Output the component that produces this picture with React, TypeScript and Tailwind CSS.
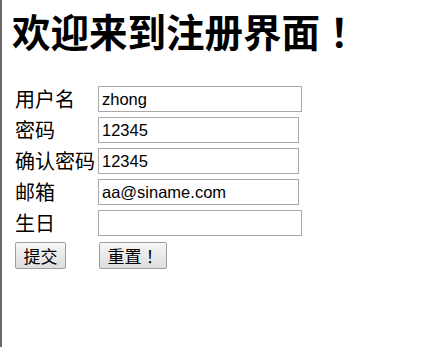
import React from 'react';

const cjk = { fontFamily: '"Noto Sans CJK SC", "Microsoft YaHei", sans-serif' };
const jp = { fontFamily: '"Noto Sans CJK JP", sans-serif' };
const latin = { fontFamily: '"Liberation Sans", Arial, "Noto Sans CJK SC", sans-serif' };

interface Field {
  label: string;
  value: string;
  width: string;
}

const fields: Field[] = [
  { label: '用户名', value: 'zhong', width: 'w-[204px]' },
  { label: '密码', value: '12345', width: 'w-[201px]' },
  { label: '确认密码', value: '12345', width: 'w-[201px]' },
  { label: '邮箱', value: 'aa@siname.com', width: 'w-[201px]' },
  { label: '生日', value: '', width: 'w-[204px]' },
];

export default function App() {
  return (
    <div className="w-[448px] h-[347px] bg-white border-l-2 border-[#6b6b6b] overflow-hidden text-black" style={cjk}>
      <h1 className="pl-[10px] pt-[6px] text-[38.5px] leading-[48px] font-bold">
        欢迎来到注册界面<span style={jp}>！</span>
      </h1>
      <form className="mt-[32px] pl-[13px] flex flex-col gap-[5px]">
        {fields.map((f) => (
          <div key={f.label} className="flex items-center h-[26px]">
            <span className="w-[83px] text-[20px] leading-[26px]">{f.label}</span>
            <input
              type="text"
              defaultValue={f.value}
              className={`${f.width} h-[26px] border border-[#a9a9a9] px-[3px] text-[16.5px] outline-none`}
              style={latin}
            />
          </div>
        ))}
        <div className="flex items-center mt-[1px] h-[27px]">
          <div className="w-[84px]">
            <button
              type="button"
              className="w-[51px] h-[27px] border border-[#9e9e9e] rounded-[2px] bg-gradient-to-b from-[#f6f6f6] to-[#dddddd] text-[17px] leading-[24px]"
            >
              提交
            </button>
          </div>
          <button
            type="button"
            className="w-[68px] h-[27px] border border-[#9e9e9e] rounded-[2px] bg-gradient-to-b from-[#f6f6f6] to-[#dddddd] text-[17px] leading-[24px]"
          >
            重置<span style={jp}>！</span>
          </button>
        </div>
      </form>
    </div>
  );
}
